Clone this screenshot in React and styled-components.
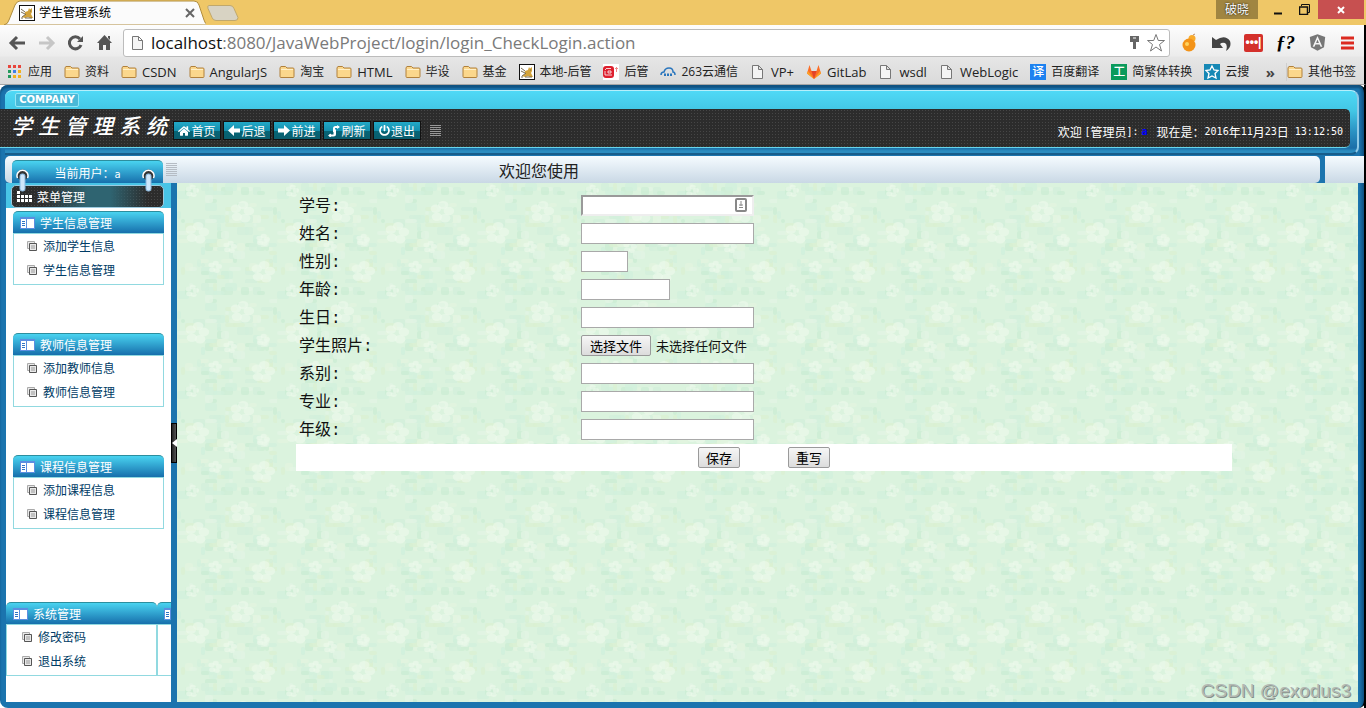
import React, { useRef, useState } from 'react'
import styled, { createGlobalStyle } from 'styled-components'
import { FaHome, FaPowerOff, FaAngular } from 'react-icons/fa'

const GlobalStyle = createGlobalStyle`
* {
    box-sizing: border-box;
}
body {
    margin: 0;
    font-family: "Noto Sans CJK SC", sans-serif;
    font-size: 12px;
    line-height: 16px;
}
button, input {
    font-family: inherit;
    margin: 0;
}
a {
    text-decoration: none;
}
svg {
    display: block;
    flex: none;
}
`

const Window = styled.div`
display: flex;
flex-direction: column;
min-height: 100vh;
background: #efc767;
`

/* ---------- browser ---------- */

const Chrome = styled.div`
font-family: "Open Sans", "Noto Sans CJK SC", sans-serif;
color: #222;
`
const TabStrip = styled.div`
display: flex;
align-items: flex-start;
height: 25px;
`
const Tab = styled.div`
position: relative;
display: flex;
align-items: center;
width: 202px;
height: 25px;
margin-left: 4px;
padding: 0 10px 0 15px;
gap: 4px;
color: #000;
`
const TabShape = styled.svg`
position: absolute;
left: 0;
top: 0;
`
const TabTitle = styled.span`
position: relative;
flex: 1;
`
const TabIcon = styled.span`
position: relative;
`
const PlainButton = styled.button`
position: relative;
display: flex;
align-items: center;
justify-content: center;
padding: 0;
border: 0;
background: transparent;
`
const WindowButtons = styled.div`
display: flex;
margin: 0 2px 0 auto;
`
const Profile = styled.div`
width: 42px;
height: 19px;
margin-right: 6px;
background: #a08541;
color: #fff;
text-align: center;
line-height: 19px;
text-shadow: 0 0 2px #000;
`
const WinButton = styled(PlainButton)`
width: ${p => p.$close ? 46 : 27}px;
height: 19px;
background: ${p => p.$close ? '#c75050' : 'transparent'};
`
const Bars = styled.div`
border-right: 2px solid #000;
border-bottom: 1px solid #a5a5a5;
background: linear-gradient(#fdfdfd, #ececec 31px, #e6e6e6 32px, #dadada);
`
const Toolbar = styled.div`
display: flex;
align-items: center;
height: 34px;
padding: 1px 9px 0 8px;
`
const NavIcons = styled.div`
display: flex;
gap: 10px;
`
const Omnibox = styled.div`
display: flex;
flex: 1;
align-items: center;
gap: 5px;
height: 28px;
margin: 0 12px 0 9px;
padding: 0 3px 0 6px;
border: 1px solid #bcbcbc;
border-radius: 3px;
background: #fff;
`
const Url = styled.span`
flex: 1;
font-family: "Open Sans", sans-serif;
font-size: 17px;
line-height: 22px;
color: #7a7a7a;
b {
    font-weight: 400;
    color: #111;
}
`
const Extensions = styled.div`
display: flex;
align-items: center;
gap: 13px;
`
const Dots = styled.span`
width: 19px;
height: 18px;
border-radius: 2px;
background: #d4302b;
color: #fff;
font: bold 12px/16px "Liberation Sans", sans-serif;
text-align: center;
`
const FontMark = styled.span`
font: italic bold 19px/20px "Liberation Serif", serif;
color: #000;
`
const Bookmarks = styled.nav`
display: flex;
align-items: center;
height: 25px;
padding: 0 8px;
`
const Bookmark = styled.a`
display: flex;
align-items: center;
gap: 5px;
margin-right: 12px;
color: #222;
font-size: ${p => p.$latin ? 13 : 12}px;
white-space: nowrap;
&:last-child {
    margin: 0;
}
`
const More = styled.button`
margin: 0 0 0 auto;
padding: 0 11px 0 0;
border: 0;
border-right: 1px solid #cfcfcf;
background: transparent;
color: #444;
font: bold 15px/18px "Open Sans", sans-serif;
& + * {
    margin-left: 3px;
}
`
const Tile = styled.span`
width: 16px;
height: 16px;
background: ${p => p.$color};
color: #fff;
font-size: 12px;
font-weight: 500;
line-height: 16px;
text-align: center;
`

/* ---------- application ---------- */

const Page = styled.div`
position: relative;
display: flex;
flex: 1;
flex-direction: column;
padding: 5px 0 6px;
border-right: 2px solid #000;
border-radius: 8px;
background: linear-gradient(90deg, #1b74ae, #1b74ae calc(100% - 5px), #0f5281);
box-shadow: inset 0 3px 2px #0f5281;
`
const Backdrop = styled.div`
display: flex;
flex: 1;
background: linear-gradient(90deg, #fff calc(100% - 2px), #000 0);
`
const Header = styled.header`
margin: 0 5px 0 5px;
height: 65px;
border-top: 1px solid #b5effb;
border-right: 2px solid #8fc9e6;
border-bottom: 2px solid #175d8c;
border-radius: 7px 8px 8px 0;
background: linear-gradient(#4fd9f6, #42c6e5 20px, #2b93c4 40px, #1b6ea8 57px, #2a8cc0 60px);
`
const HeaderTop = styled.div`
height: 18px;
padding: 2px 0 0 10px;
`
const Company = styled.div`
width: 64px;
height: 14px;
border: 1px solid #92e6f7;
border-radius: 2px;
background: #49b9d8;
color: #fff;
font: bold 10px/12px "DejaVu Sans", sans-serif;
text-align: center;
`
const DarkBar = styled.div`
display: flex;
align-items: center;
height: 39px;
margin: 0 7px 0 -5px;
padding: 5px 7px 0 11px;
border-bottom: 1px solid #67d5ec;
border-radius: 0 5px 5px 0;
background: radial-gradient(#464646 1px, transparent 1px) 0 0 / 3px 3px, #2c2c2c;
color: #fff;
`
const Title = styled.h1`
display: flex;
gap: 6px;
margin: -11px 6px 0 0;
font: italic 500 21px/28px "Noto Sans CJK SC", sans-serif;
`
const NavButton = styled.button`
display: flex;
align-items: center;
justify-content: center;
gap: 1px;
width: 48px;
height: 19px;
margin-right: 2px;
padding: 0;
border: 1px solid #111;
background: linear-gradient(#22a9c7, #1590ae 50%, #056677 50%, #0a5d6e);
color: #fff;
font-size: 12px;
line-height: 16px;
`
const Lines = styled.span`
width: 11px;
height: ${p => p.$rows * 2}px;
margin-left: ${p => p.$gap}px;
background: repeating-linear-gradient(${p => p.$color} 0 1px, transparent 1px 2px);
`
const Status = styled.div`
display: flex;
align-items: center;
margin-left: auto;
padding-top: 3px;
white-space: pre;
`
const Half = styled.span`
font: 10px/16px "DejaVu Sans Mono", monospace;
`
const UserLink = styled.a`
margin: 0 9px 0 3px;
color: #00f;
font: bold 10px/16px "DejaVu Sans Mono", monospace;
`
const Strip = styled.div`
display: flex;
gap: 5px;
height: 27px;
margin: 1px 0 0 5px;
`
const StripMain = styled.div`
display: flex;
flex: 1;
align-items: center;
padding-left: 7px;
border-radius: 5px;
background: linear-gradient(#f5fbff, #c9d8e5);
`
const StripEnd = styled.div`
width: 39px;
background: linear-gradient(#f5fbff, #c9d8e5);
`
const Badge = styled.div`
position: relative;
align-self: flex-end;
width: 151px;
height: 23px;
padding-top: 4px;
border-top: 1px solid #2c8e9e;
border-radius: 5px 5px 0 0;
background: linear-gradient(#49d3f0, #176fac);
color: #fff;
text-align: center;
`
const Ring = styled.svg`
position: absolute;
z-index: 1;
top: 7px;
left: ${p => p.$right ? 'auto' : '4px'};
right: ${p => p.$right ? '8px' : 'auto'};
`
const Welcome = styled.div`
margin-left: 322px;
font-size: 16px;
line-height: 20px;
color: #222;
`
const Work = styled.div`
display: flex;
flex: 1;
padding: 0 6px;
`
const Sidebar = styled.aside`
width: 165px;
overflow: hidden;
background: #fff;
`
const MenuBand = styled.div`
padding: 2px 7px 0 5px;
height: 25px;
background: #48c4e6;
`
const MenuTitle = styled.h2`
display: flex;
align-items: center;
gap: 5px;
height: 23px;
margin: 0;
padding-left: 5px;
border: 1px solid #9ccbe0;
border-radius: 5px;
background:
    linear-gradient(90deg, transparent 20%, #2f6471 50%, #2f6471 65%, transparent 90%),
    radial-gradient(#464646 1px, transparent 1px) 0 0 / 3px 3px, #2c2c2c;
color: #fff;
font-size: 12px;
font-weight: 400;
`
const Groups = styled.div`
display: flex;
flex-direction: column;
gap: 48px;
padding: 3px 7px 73px;
`
const SystemRow = styled.div`
display: grid;
grid-template-columns: 151px 151px;
`
const GroupHead = styled.h3`
display: flex;
align-items: center;
gap: 5px;
height: 22px;
margin: 0;
padding: 0 0 0 7px;
border-top: 1px solid #2c8e9e;
border-radius: 5px 5px 0 0;
background: linear-gradient(#49d3f0, #176fac);
color: #fff;
font-size: 12px;
font-weight: 400;
`
const GroupList = styled.ul`
height: 52px;
margin: 0;
padding: 0 0 0 ${p => p.$wide ? 15 : 13}px;
list-style: none;
border: 1px solid #91d9e0;
`
const GroupItem = styled.a`
display: flex;
align-items: center;
gap: 5px;
height: 24px;
color: #003c66;
`
const Divider = styled.div`
display: flex;
align-items: center;
width: 6px;
`
const Collapse = styled.button`
width: 6px;
height: 40px;
padding: 0;
border: 1px solid #000;
background: linear-gradient(90deg, #222, #555);
`
const Content = styled.main`
position: relative;
flex: 1;
padding: 8px 9px 8px 2px;
overflow: hidden;
`
const Flowers = styled.svg`
position: absolute;
left: 0;
top: 0;
width: 100%;
height: 100%;
`
const Form = styled.form`
position: relative;
display: grid;
gap: 1px;
width: 80%;
margin: 0 auto;
padding-top: 1px;
font-size: 16px;
line-height: 20px;
color: #111;
`
const Field = styled.div`
display: grid;
grid-template-columns: 282px 1fr;
align-items: center;
height: 27px;
padding-left: 3px;
`
const FieldLabel = styled.label`
padding-top: 2px;
font-family: "Liberation Mono", "Noto Sans CJK SC", monospace;
`
const InputWrap = styled.div`
position: relative;
display: flex;
align-items: center;
gap: 5px;
font-size: 13px;
`
const TextInput = styled.input`
width: ${p => p.$width}px;
height: 21px;
padding: 1px 3px;
border: ${p => p.$sunken ? '2px inset #eee' : '1px solid #a9a9a9'};
border-radius: 0;
background: #fff;
font-size: 13px;
`
const ContactIcon = styled.svg`
position: absolute;
left: 154px;
top: 3px;
`
const FormButton = styled.button`
height: 21px;
padding: 0 ${p => p.$file ? 8 : 7}px;
border: 1px solid #9a9a9a;
border-radius: 2px;
background: linear-gradient(#f6f6f6, #dcdcdc);
color: #000;
font-size: 13px;
line-height: 16px;
`
const Actions = styled.div`
display: flex;
align-items: center;
justify-content: center;
gap: 48px;
height: 27px;
background: #fff;
`
const Watermark = styled.div`
position: absolute;
right: 7px;
bottom: -1px;
color: #b3b9b4;
font: 19px/24px "Liberation Sans", sans-serif;
text-shadow: 1px 1px 0 #84908a;
`

const CatIcon = () => (
    <svg width="16" height="16">
        <rect x=".5" y=".5" width="15" height="15" fill="#fff" stroke="#111" />
        <path d="M6 7l3-1 1-3 1 1.500 2-1.500v4l-1 2 2 4h-3l-2-1-3 1-3-1 3-2z" fill="#d3a33a" />
        <path d="M2 4l4 3M2 7l4 2M3 12l4-3M6 13h7M2 13h2M11 6h1" stroke="#776b50" fill="none" />
    </svg>
)
const FolderIcon = () => (
    <svg width="16" height="16">
        <path d="M1 4q0-1 1-1V2.500h4.500l1.500 1.500h6q1 0 1 1v7.500q0 1-1 1H2q-1 0-1-1z" fill="#fbd78c" stroke="#b1813c" />
        <path d="M2 5.500h12" stroke="#fff0c8" />
    </svg>
)
const PageIcon = () => (
    <svg width="16" height="16" fill="#f4f4f4" stroke="#777">
        <path d="M2.500 1.500h6l4 4v9h-10zM8.500 1.500v4h4" />
    </svg>
)
const AppsIcon = () => {
    const colors = ['#e8453c', '#e8453c', '#e8453c', '#249a5c', '#3f7ee8', '#f2b01e', '#249a5c', '#f2b01e', '#f2b01e']
    return (
        <svg width="15" height="15">
            {colors.map((c, i) => <rect key={i} x={(i % 3) * 5} y={1 + Math.floor(i / 3) * 5} width="3" height="3" fill={c} />)}
        </svg>
    )
}
const SealIcon = () => (
    <svg width="16" height="16">
        <rect width="16" height="16" fill="#fff" />
        <rect y="2" width="11" height="12" rx="3" fill="#dd1f2d" />
        <path d="M3 4.500h5M5 7h3v2H5zM2 7v4h7M2 5l1 1" stroke="#fff" strokeWidth=".8" fill="none" />
        <path d="M13.500 3v5M12 4.500h3" stroke="#e88" />
    </svg>
)
const CloudIcon = () => (
    <svg width="16" height="16" fill="none" stroke="#2b76bd" strokeWidth="1.500">
        <path d="M1 11q0-3 3-3Q5 4 9 4q4 0 4 4 2 0 2 3" />
        <path d="M5 12V9.500M8 12V9.500M11 12V9.500" strokeWidth="2" />
    </svg>
)
const GitLabIcon = () => (
    <svg width="16" height="16">
        <path d="M8 15L1 9.500 3.500 1l2 6h5l2-6L15 9.500z" fill="#fc6d26" />
        <path d="M8 15L5.500 7h5z" fill="#e24329" />
        <path d="M8 15L1 9.500 2 7zM8 15l7-5.500L14 7z" fill="#fca326" />
    </svg>
)
const StarTile = () => (
    <svg width="16" height="16">
        <rect width="16" height="16" fill="#1688b5" />
        <path d="M8 2l2 4 4 .5-3 3 1 4.500-4-2-4 2 1-4.500-3-3L6 6z" fill="#1688b5" stroke="#fff" strokeWidth="1.300" />
    </svg>
)
const PanelIcon = () => (
    <svg width="15" height="12">
        <rect width="15" height="12" fill="#5b8ee0" />
        <rect x="1" y="2" width="5" height="9" fill="#fff" />
        <rect x="7" y="2" width="7" height="9" fill="#fff" />
        <path d="M2 4.500h3M2 6.500h3M2 8.500h3" stroke="#2f73c4" />
    </svg>
)
const CopyIcon = () => (
    <svg width="11" height="11" fill="#e9e9e9">
        <path d="M.5 .5h7v7h-7z" stroke="#aaa" />
        <path d="M2.500 2.500h7v7h-7z" stroke="#555" />
        <path d="M4 5h4M4 7h4" stroke="#999" />
    </svg>
)
const GridIcon = () => (
    <svg width="15" height="11" fill="#fff">
        {[0, 4, 8, 12].map(x => <rect key={x} x={x} y="4" width="3" height="3" />)}
        {[0, 4, 8, 12].map(x => <rect key={x} x={x} y="8" width="3" height="3" />)}
        <rect width="3" height="3" />
    </svg>
)
const ArrowIcon = ({ right }) => (
    <svg width="12" height="11" fill="#fff">
        <path d={right ? 'M12 5.500L6 0v3.500H0v4h6V11z' : 'M0 5.500L6 0v3.500h6v4H6V11z'} />
    </svg>
)
const RefreshIcon = () => (
    <svg width="12" height="12" fill="#fff">
        <path d="M5 10V3.500q0-2.500 2.500-2.500H11v2H7v4H5z" />
        <path d="M8 4.500V9q0 2.500-2.500 2.500H1v-2h4.500V4.500z" />
        <path d="M0 10.500l3-2v4zM12 2L9 0v4z" />
    </svg>
)
const RingIcon = ({ right }) => (
    <Ring $right={right} width="13" height="24">
        <circle cx="6.500" cy="7" r="5.500" fill="#333" />
        <path d="M1.500 10a5.500 5.500 0 1 1 10 0" fill="none" stroke="#fff" strokeWidth="1.500" />
        <rect x="4" y="6" width="5" height="17" rx="2" fill="#cfe6fa" stroke="#86b8e0" />
    </Ring>
)

const blossoms = [
    [65, 29, 7], [86, 89, 7], [20, 50, 7], [15, 8, 4], [86, 57, 4], [53, 64, 4], [38, 84, 4],
]
const seeded = (n) => {
    const v = Math.sin(n * 127.1) * 43758.5
    return v - Math.floor(v)
}
const blotchColors = ['#cbedd4', '#d4f0dc', '#e4f6e0', '#d2f1de', '#e4f5e6', '#dcf1d2']

const FlowerBackground = () => (
    <Flowers aria-hidden="true">
        <defs>
            <pattern id="flowers" width="100" height="100" patternUnits="userSpaceOnUse">
                <rect width="100" height="100" fill="#dbf3de" />
                {Array.from({ length: 110 }, (_, i) => (
                    <rect
                        key={i}
                        x={Math.floor(seeded(i + 1) * 25) * 4}
                        y={Math.floor(seeded(i + 201) * 25) * 4}
                        width={4 + Math.floor(seeded(i + 401) * 3) * 4}
                        height={4 + Math.floor(seeded(i + 601) * 2) * 4}
                        rx="2"
                        fill={blotchColors[i % blotchColors.length]}
                        opacity=".7"
                    />
                ))}
                {blossoms.map(([x, y, r]) => [0, 1, 2, 3, 4].map(k => {
                    const angle = (k * 72 - 80) * Math.PI / 180
                    return (
                        <ellipse
                            key={`${x}-${y}-${k}`}
                            cx={x + Math.cos(angle) * r}
                            cy={y + Math.sin(angle) * r}
                            rx={r * 0.75}
                            ry={r * 0.6}
                            fill="#eefaec"
                            opacity=".6"
                        />
                    )
                }))}
            </pattern>
        </defs>
        <rect width="100%" height="100%" fill="url(#flowers)" />
    </Flowers>
)

const bookmarks = [
    ['应用', <AppsIcon />], ['资料', <FolderIcon />], ['CSDN', <FolderIcon />], ['AngularJS', <FolderIcon />],
    ['淘宝', <FolderIcon />], ['HTML', <FolderIcon />], ['毕设', <FolderIcon />], ['基金', <FolderIcon />],
    ['本地-后管', <CatIcon />], ['后管', <SealIcon />], ['263云通信', <CloudIcon />], ['VP+', <PageIcon />],
    ['GitLab', <GitLabIcon />], ['wsdl', <PageIcon />], ['WebLogic', <PageIcon />],
    ['百度翻译', <Tile $color="#1d82f0">译</Tile>], ['简繁体转换', <Tile $color="#0a9a5b">工</Tile>], ['云搜', <StarTile />],
]

const navButtons = [
    ['首页', <FaHome size={12} />], ['后退', <ArrowIcon />], ['前进', <ArrowIcon right />],
    ['刷新', <RefreshIcon />], ['退出', <FaPowerOff size={11} />],
]

const groups = [
    ['学生信息管理', ['添加学生信息', '学生信息管理']],
    ['教师信息管理', ['添加教师信息', '教师信息管理']],
    ['课程信息管理', ['添加课程信息', '课程信息管理']],
]

const fields = [
    { id: 'no', label: '学号', width: 173, sunken: true },
    { id: 'name', label: '姓名', width: 173 },
    { id: 'sex', label: '性别', width: 47 },
    { id: 'age', label: '年龄', width: 89 },
    { id: 'birthday', label: '生日', width: 173 },
    { id: 'photo', label: '学生照片', file: true },
    { id: 'dept', label: '系别', width: 173 },
    { id: 'major', label: '专业', width: 173 },
    { id: 'grade', label: '年级', width: 173 },
]

const MenuGroup = ({ title, items, wide }) => (
    <div>
        <GroupHead><PanelIcon />{title}</GroupHead>
        <GroupList $wide={wide}>
            {items.map(item => <li key={item}><GroupItem href="#"><CopyIcon />{item}</GroupItem></li>)}
        </GroupList>
    </div>
)

const FileField = ({ id }) => {
    const input = useRef(null)
    const [fileName, setFileName] = useState('')
    return (
        <>
            <input id={id} ref={input} type="file" hidden onChange={e => setFileName(e.target.files[0]?.name)} />
            <FormButton $file type="button" onClick={() => input.current.click()}>选择文件</FormButton>
            <span>{fileName || '未选择任何文件'}</span>
        </>
    )
}

const Browser = () => (
    <Chrome>
        <TabStrip>
            <Tab>
                <TabShape width="202" height="25">
                    <path d="M0 25q4-1 5-5l6-15q2-4 5-4h174q4 0 5 4l5 15q1 4 4 5z" fill="#fbfbfb" stroke="#b08d3e" />
                </TabShape>
                <TabIcon><CatIcon /></TabIcon>
                <TabTitle>学生管理系统</TabTitle>
                <PlainButton aria-label="关闭标签">
                    <svg width="12" height="12" stroke="#666" strokeWidth="2"><path d="M2 2l8 8M10 2l-8 8" /></svg>
                </PlainButton>
            </Tab>
            <PlainButton aria-label="新标签">
                <svg width="33" height="22">
                    <path d="M3 5.500h21q3 0 4 3l4 9q0 3-3 3H10q-3 0-4-3l-4-9q-1-3 1-3z" fill="#d8d3c3" stroke="#c0a86c" />
                </svg>
            </PlainButton>
            <WindowButtons>
                <Profile>破晓</Profile>
                <WinButton aria-label="最小化"><svg width="10" height="12"><path d="M1 9.500h8" stroke="#111" strokeWidth="2" /></svg></WinButton>
                <WinButton aria-label="还原">
                    <svg width="11" height="11" fill="none" stroke="#111"><path d="M2.500 2V.5h8v8H9" /><path d="M.5 3h8v7.500h-8z" strokeWidth="1.500" /></svg>
                </WinButton>
                <WinButton $close aria-label="关闭">
                    <svg width="8" height="8" stroke="#fff" strokeWidth="2"><path d="M1 1l6 6M7 1L1 7" /></svg>
                </WinButton>
            </WindowButtons>
        </TabStrip>
        <Bars>
            <Toolbar>
                <NavIcons>
                    <PlainButton aria-label="后退">
                        <svg width="19" height="18" fill="none" stroke="#555" strokeWidth="3"><path d="M17 9H4M9 3L3 9l6 6" /></svg>
                    </PlainButton>
                    <PlainButton aria-label="前进">
                        <svg width="19" height="18" fill="none" stroke="#c6c6c6" strokeWidth="3"><path d="M2 9h13M10 3l6 6-6 6" /></svg>
                    </PlainButton>
                    <PlainButton aria-label="刷新">
                        <svg width="19" height="18" fill="none" stroke="#555" strokeWidth="3"><path d="M15 11a6 6 0 1 1-1-6" /><path d="M17 2v6h-6z" fill="#555" stroke="none" /></svg>
                    </PlainButton>
                    <PlainButton aria-label="主页">
                        <svg width="19" height="18" fill="#555"><path d="M9.500 1L17 9h-2v7h-4v-5H8v5H4V9H2zM13 2h2v4l-2-2z" /></svg>
                    </PlainButton>
                </NavIcons>
                <Omnibox>
                    <PageIcon />
                    <Url><b>localhost</b>:8080/JavaWebProject/login/login_CheckLogin.action</Url>
                    <svg width="12" height="16" fill="#666"><path d="M1 1h9v6H7v7H4V7H1z" /><path d="M4 3h3" stroke="#fff" /></svg>
                    <svg width="20" height="20" fill="#fff" stroke="#777"><path d="M10 1.500l2.300 6h6.200l-5 4 2 6.500-5.500-4L4.500 18l2-6.500-5-4h6.200z" /></svg>
                </Omnibox>
                <Extensions>
                    <svg width="16" height="20">
                        <circle cx="10" cy="5.500" r="3.500" fill="#f9ab2c" />
                        <circle cx="7" cy="12" r="6.500" fill="#f39318" />
                        <circle cx="5" cy="11" r="2" fill="#ffd35e" />
                        <path d="M11 2l2-1" stroke="#b86" />
                    </svg>
                    <svg width="20" height="18" fill="#444"><path d="M1 3l4 3q9-6 14 1 2 6-4 10 2-6-1-8-3-1-5 1l3 4H1z" /></svg>
                    <Dots>•••|</Dots>
                    <FontMark>ƒ?</FontMark>
                    <FaAngular size={19} color="#777" />
                    <svg width="15" height="14" stroke="#dc2a20" strokeWidth="3"><path d="M1 2h13M1 7h13M1 12h13" /></svg>
                </Extensions>
            </Toolbar>
            <Bookmarks>
                {bookmarks.map(([name, icon]) => (
                    <Bookmark key={name} href="#" $latin={/^[\w+]+$/.test(name)}>{icon}{name}</Bookmark>
                ))}
                <More>»</More>
                <Bookmark href="#"><FolderIcon />其他书签</Bookmark>
            </Bookmarks>
        </Bars>
    </Chrome>
)

const App = () => (
    <Window>
        <GlobalStyle />
        <Browser />
        <Backdrop>
            <Page>
                <Header>
                    <HeaderTop><Company>COMPANY</Company></HeaderTop>
                    <DarkBar>
                        <Title>{[...'学生管理系统'].map(c => <span key={c}>{c}</span>)}</Title>
                        {navButtons.map(([name, icon]) => <NavButton key={name}>{icon}{name}</NavButton>)}
                        <Lines $rows={6} $gap={7} $color="#999" />
                        <Status>
                            欢迎 <Half>[</Half>管理员<Half>]:</Half><UserLink href="#">a</UserLink>
                            现在是：<Half>2016</Half>年<Half>11</Half>月<Half>23</Half>日<Half> 13:12:50</Half>
                        </Status>
                    </DarkBar>
                </Header>
                <Strip>
                    <StripMain>
                        <Badge>
                            <RingIcon />
                            当前用户：<Half>a</Half>
                            <RingIcon right />
                        </Badge>
                        <Lines $rows={7} $gap={3} $color="#b5bcc4" />
                        <Welcome>欢迎您使用</Welcome>
                    </StripMain>
                    <StripEnd />
                </Strip>
                <Work>
                    <Sidebar>
                        <MenuBand><MenuTitle><GridIcon />菜单管理</MenuTitle></MenuBand>
                        <Groups>
                            {groups.map(([title, items]) => <MenuGroup key={title} title={title} items={items} />)}
                        </Groups>
                        <SystemRow>
                            <MenuGroup wide title="系统管理" items={['修改密码', '退出系统']} />
                            <MenuGroup title="" items={[]} />
                        </SystemRow>
                    </Sidebar>
                    <Divider>
                        <Collapse aria-label="收起菜单">
                            <svg width="5" height="8" fill="#fff"><path d="M5 0v8L0 4z" /></svg>
                        </Collapse>
                    </Divider>
                    <Content>
                        <FlowerBackground />
                        <Form onSubmit={e => e.preventDefault()}>
                            {fields.map(f => (
                                <Field key={f.id}>
                                    <FieldLabel htmlFor={f.id}>{f.label}:</FieldLabel>
                                    <InputWrap>
                                        {f.file
                                            ? <FileField id={f.id} />
                                            : <TextInput id={f.id} type="text" $width={f.width} $sunken={f.sunken} />}
                                        {f.sunken && (
                                            <ContactIcon width="12" height="14">
                                                <rect x="1" y="1" width="10" height="12" rx="1" fill="#fff" stroke="#888" strokeWidth="2" />
                                                <path d="M6 3v5M4 7h4M4 9.500h4" stroke="#888" />
                                            </ContactIcon>
                                        )}
                                    </InputWrap>
                                </Field>
                            ))}
                            <Actions>
                                <FormButton type="submit">保存</FormButton>
                                <FormButton type="reset">重写</FormButton>
                            </Actions>
                        </Form>
                        <Watermark>CSDN @exodus3</Watermark>
                    </Content>
                </Work>
            </Page>
        </Backdrop>
    </Window>
)

export default App
